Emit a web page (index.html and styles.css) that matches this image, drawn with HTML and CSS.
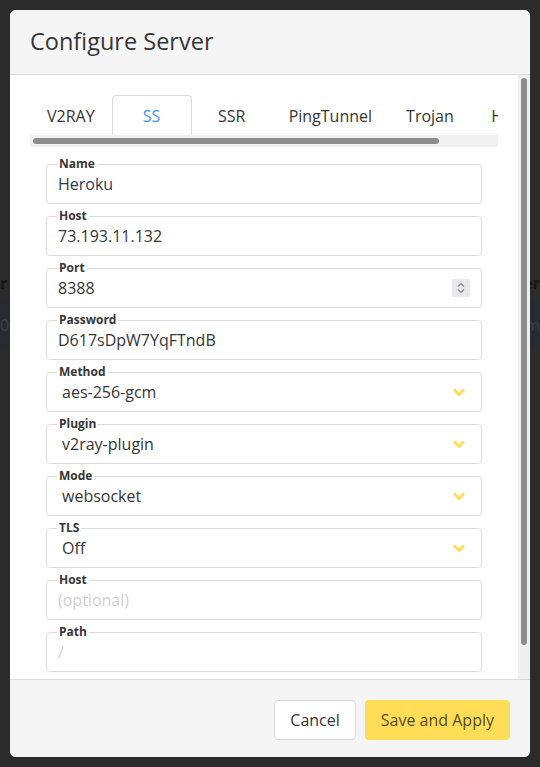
FILE: index.html
```html
<!DOCTYPE html>
<html lang="en">
<head>
<meta charset="utf-8">
<title>Configure Server</title>
<link rel="stylesheet" href="styles.css">
</head>
<body>
<div class="page">
  <div class="page-head"><span>r</span><span>er</span></div>
  <div class="page-band"><span>0</span><span>m</span></div>
</div>

<div class="modal">
  <header class="modal-head">
    <h1 class="modal-title">Configure Server</h1>
  </header>
  <section class="modal-body">
    <div class="body-content">
      <div class="tabs">
        <ul class="tab-list">
          <li class="tab">V2RAY</li>
          <li class="tab is-active">SS</li>
          <li class="tab">SSR</li>
          <li class="tab">PingTunnel</li>
          <li class="tab">Trojan</li>
          <li class="tab">HTTP</li>
        </ul>
        <div class="hscroll"><div class="hscroll-thumb"></div></div>
      </div>

      <form class="fields">
        <fieldset class="field">
          <legend>Name</legend>
          <div class="ctl"><input class="inp inp-name" type="text" value="Heroku" readonly></div>
        </fieldset>
        <fieldset class="field">
          <legend>Host</legend>
          <div class="ctl"><input class="inp" type="text" value="73.193.11.132" readonly></div>
        </fieldset>
        <fieldset class="field">
          <legend>Port</legend>
          <div class="ctl">
            <input class="inp" type="text" value="8388" readonly>
            <span class="spin"><svg width="18" height="18" viewBox="0 0 18 18"><path d="M6 7.5 9 4.5 12 7.5M6 10.5 9 13.5 12 10.5" fill="none" stroke="#8f8f9d" stroke-width="1.4"/></svg></span>
          </div>
        </fieldset>
        <fieldset class="field">
          <legend>Password</legend>
          <div class="ctl"><input class="inp" type="text" value="D617sDpW7YqFTndB" readonly></div>
        </fieldset>
        <fieldset class="field">
          <legend>Method</legend>
          <div class="ctl">
            <select class="sel"><option>aes-256-gcm</option></select>
            <svg class="chev" width="14" height="10" viewBox="0 0 14 10"><path d="M2 2.5 7 7.5 12 2.5" fill="none" stroke="#ffdd57" stroke-width="3"/></svg>
          </div>
        </fieldset>
        <fieldset class="field">
          <legend>Plugin</legend>
          <div class="ctl">
            <select class="sel"><option>v2ray-plugin</option></select>
            <svg class="chev" width="14" height="10" viewBox="0 0 14 10"><path d="M2 2.5 7 7.5 12 2.5" fill="none" stroke="#ffdd57" stroke-width="3"/></svg>
          </div>
        </fieldset>
        <fieldset class="field">
          <legend>Mode</legend>
          <div class="ctl">
            <select class="sel"><option>websocket</option></select>
            <svg class="chev" width="14" height="10" viewBox="0 0 14 10"><path d="M2 2.5 7 7.5 12 2.5" fill="none" stroke="#ffdd57" stroke-width="3"/></svg>
          </div>
        </fieldset>
        <fieldset class="field">
          <legend>TLS</legend>
          <div class="ctl">
            <select class="sel"><option>Off</option></select>
            <svg class="chev" width="14" height="10" viewBox="0 0 14 10"><path d="M2 2.5 7 7.5 12 2.5" fill="none" stroke="#ffdd57" stroke-width="3"/></svg>
          </div>
        </fieldset>
        <fieldset class="field">
          <legend>Host</legend>
          <div class="ctl"><input class="inp" type="text" placeholder="(optional)" readonly></div>
        </fieldset>
        <fieldset class="field">
          <legend>Path</legend>
          <div class="ctl"><input class="inp" type="text" placeholder="/" readonly></div>
        </fieldset>
      </form>
    </div>
    <div class="vscroll"><div class="vscroll-thumb"></div></div>
  </section>
  <footer class="modal-foot">
    <button class="btn" type="button">Cancel</button>
    <button class="btn btn-warning" type="button">Save and Apply</button>
  </footer>
</div>
</body>
</html>
```

FILE: styles.css
```css
* { box-sizing: border-box; }

html, body {
  margin: 0;
  padding: 0;
  height: 100%;
}

body {
  background: #2b2b2b;
  font-family: "Open Sans", "Noto Sans", sans-serif;
  color: #363636;
  overflow: hidden;
}

/* page behind the overlay */
.page {
  padding-top: 274px;
}
.page-head {
  display: flex;
  justify-content: space-between;
  font-size: 16px;
  font-weight: 700;
  color: #161616;
  line-height: 18px;
}
.page-band {
  margin-top: 9px;
  height: 48px;
  background: #262b31;
  display: flex;
  justify-content: space-between;
  align-items: center;
  font-size: 16px;
  color: #3b4149;
}

/* modal */
.modal {
  position: fixed;
  left: 10px;
  top: 10px;
  width: 520px;
  height: 747px;
  background: #fff;
  border-radius: 6px;
  overflow: hidden;
  display: flex;
  flex-direction: column;
}

.modal-head {
  flex: none;
  height: 65px;
  padding: 0 20px;
  background: #f5f5f5;
  border-bottom: 1px solid #dbdbdb;
  display: flex;
  align-items: center;
}
.modal-title {
  margin: 0;
  font-size: 23.5px;
  font-weight: 400;
  line-height: 1;
  color: #363636;
}

.modal-body {
  flex: 1;
  min-height: 0;
  display: flex;
}
.body-content {
  flex: 1;
  min-width: 0;
  padding: 20px 20px 0;
  overflow: hidden;
}
.vscroll {
  flex: none;
  width: 12px;
  background: #efeff0;
  padding: 3px 3px 0;
}
.vscroll-thumb {
  width: 6px;
  height: 567px;
  border-radius: 3px;
  background: #8d8d8d;
}

/* tabs */
.tabs {
  width: 468px;
}
.tab-list {
  list-style: none;
  margin: 0;
  padding: 0;
  display: flex;
  overflow: hidden;
  height: 40px;
}
.tab {
  flex: none;
  min-width: 80px;
  padding: 0 16px;
  height: 40px;
  display: flex;
  align-items: center;
  justify-content: center;
  font-size: 16px;
  color: #363636;
  border: 1px solid transparent;
  border-bottom: 0;
  border-radius: 4px 4px 0 0;
}
.tab.is-active {
  border-color: #dbdbdb;
  color: #3f96f2;
  background: #fff;
}
.hscroll {
  height: 12px;
  background: #f0f0f0;
  padding: 3px 3px 0;
}
.hscroll-thumb {
  width: 406px;
  height: 6px;
  border-radius: 3px;
  background: #8d8d8d;
}

/* fields */
.fields {
  margin-top: 11px;
}
.field {
  margin: 0 16px 6px;
  padding: 0 10px;
  border: 1px solid #dbdbdb;
  border-radius: 4px;
  min-width: 0;
}
.field legend {
  padding: 0 2px;
  font-size: 12px;
  font-weight: 700;
  line-height: 12px;
  color: #363636;
}
.ctl {
  display: flex;
  align-items: center;
  height: 33px;
  padding-bottom: 5px;
}
.inp, .sel {
  flex: 1;
  min-width: 0;
  height: 24px;
  border: 0;
  outline: 0;
  background: transparent;
  font-family: inherit;
  font-size: 16px;
  color: #363636;
  padding: 0 0 0 1px;
  margin: 0;
}
.inp-name {
  color: #2b3a55;
}
.inp::placeholder {
  color: #cfcfcf;
}
.sel {
  -webkit-appearance: none;
  appearance: none;
  padding-left: 5px;
}
.chev {
  flex: none;
  margin-right: 5px;
}
.spin {
  flex: none;
  display: flex;
  width: 18px;
  height: 18px;
  margin-right: 1px;
  background: #e9e9ed;
  border-radius: 2px;
}

/* footer */
.modal-foot {
  flex: none;
  height: 78px;
  padding: 20px 20px 17px;
  background: #f5f5f5;
  border-top: 1px solid #dbdbdb;
  display: flex;
  justify-content: flex-end;
  align-items: flex-start;
  gap: 9px;
}
.btn {
  height: 40px;
  padding: 0 15px;
  font-family: inherit;
  font-size: 16px;
  color: #363636;
  background: #fff;
  border: 1px solid #dbdbdb;
  border-radius: 4px;
}
.btn-warning {
  background: #ffdd57;
  border-color: transparent;
  color: rgba(0, 0, 0, 0.7);
}
```
